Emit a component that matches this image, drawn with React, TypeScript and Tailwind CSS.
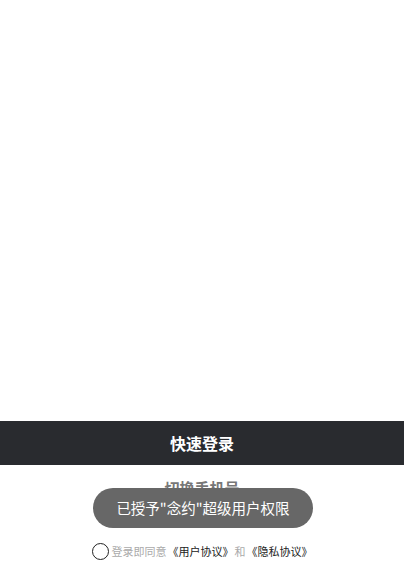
export default function App() {
  return (
    <div
      className="relative flex h-[574px] w-full flex-col bg-white"
      style={{ fontFamily: '"Noto Sans CJK SC", "Noto Sans", sans-serif' }}
    >
      <div className="flex-1" />

      <button className="flex h-[44px] w-full items-center justify-center bg-[#292b2f] text-[16px] font-bold text-white">
        快速登录
      </button>

      <div className="flex h-[46px] items-center justify-center">
        <span className="text-[15px] font-bold text-[#777777]">切换手机号</span>
      </div>

      <div className="mt-[29px] mb-[12px] flex h-[22px] items-center justify-center">
        <div className="flex items-center text-[11px]">
          <span className="mr-[3px] h-[17px] w-[17px] rounded-full border border-[#222]" />
          <span className="mr-[1px] text-[#aaaaaa]">登录即同意</span>
          <span className="mr-[1px] text-[#222]">《用户协议》</span>
          <span className="mr-[1px] text-[#aaaaaa]">和</span>
          <span className="text-[#222]">《隐私协议》</span>
        </div>
      </div>

      <div className="absolute left-[93px] top-[488px] flex h-[40px] w-[220px] items-center justify-center rounded-full bg-[#676767] text-[14.5px] text-white">
        已授予"念约"超级用户权限
      </div>
    </div>
  );
}
